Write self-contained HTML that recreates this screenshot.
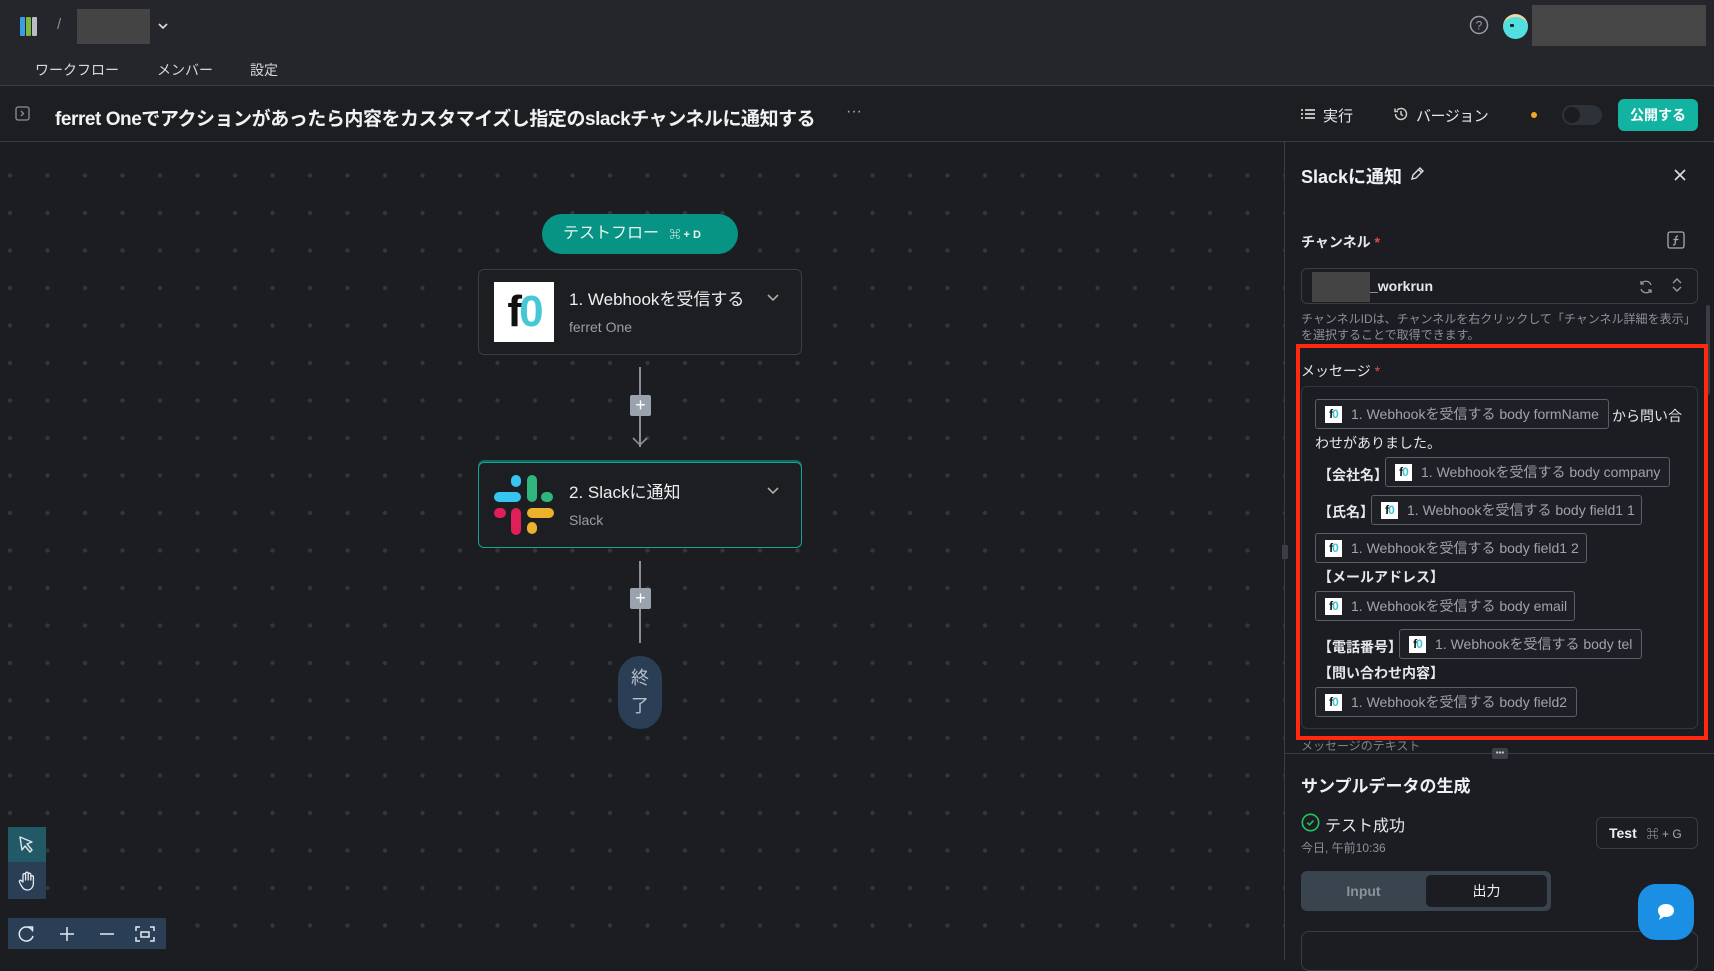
<!DOCTYPE html>
<html><head><meta charset="utf-8"><style>
*{box-sizing:border-box;margin:0;padding:0}
body{width:1714px;height:960px;overflow:hidden;background:#1c1d21;font-family:"Liberation Sans","Noto Sans CJK JP",sans-serif;color:#e6e7ea;position:relative}
.a{position:absolute}
.top{left:0;top:0;width:1714px;height:86px;background:#25262b;border-bottom:1px solid #3a3c42}
.hdr{left:0;top:86px;width:1714px;height:56px;background:#1c1e22;border-bottom:1px solid #3a3d44}
.canvas{left:0;top:142px;width:1284px;height:818px;background-color:#1c1d21;background-image:radial-gradient(circle at 18.75px 18.75px,#34363c 1.9px,transparent 2.4px);background-size:37.5px 37.5px;background-position:-8.75px 14.75px}
.panel{left:1284px;top:142px;width:430px;height:818px;background:#1b1d22;border-left:1px solid #3a3d44}
.chip{position:absolute;height:30px;border:1px solid #5a5e66;border-radius:3px;background:#1e2025;font-size:14px;color:#9fa3ab;line-height:28px;padding-left:9px;white-space:nowrap;display:flex;align-items:center}
.fo{display:inline-block;flex:none;width:17px;height:17px;background:#fff;margin-right:9px;font-weight:bold;font-size:12px;line-height:17px;text-align:center;color:#111;letter-spacing:-1px}
.fo b{color:#3fc6d3}
.lbl{position:absolute;font-size:14px;color:#e6e7ea;font-weight:bold}
.card{position:absolute;left:478px;width:324px;height:86px;border:1px solid #3a3d44;border-radius:6px;background:#1c1e22}
.ct{position:absolute;left:90px;top:15px;font-size:17px;color:#eceef0}
.cs{position:absolute;left:90px;top:49px;font-size:14px;color:#9a9ea6}
.chev{position:absolute;left:287px;top:22px}
.line{position:absolute;left:639px;width:1.5px;background:#8a8e96}
.plus{position:absolute;left:630px;width:21px;height:21px;background:#9aa2ae;border-radius:2px;color:#fff;font-size:18px;line-height:20px;text-align:center}
</style></head><body>
<div class="a top"></div>
<div class="a" style="left:20px;top:17px;width:5px;height:19px;background:#3a9ee4;border-radius:1px"></div>
<div class="a" style="left:26px;top:17px;width:5px;height:19px;background:#7dbb3e;border-radius:1px"></div>
<div class="a" style="left:32px;top:17px;width:5px;height:19px;background:#b9bcc2;border-radius:1px"></div>
<div class="a" style="left:57px;top:16px;font-size:15px;color:#8a8d94">/</div>
<div class="a" style="left:77px;top:9px;width:73px;height:35px;background:#444"></div>
<svg class="a" style="left:157px;top:20px" width="12" height="12" viewBox="0 0 12 12"><path d="M2 4l4 4 4-4" stroke="#ddd" stroke-width="1.6" fill="none"/></svg>
<div class="a" style="left:35px;top:60px;font-size:14px;color:#d6d8dc">ワークフロー</div>
<div class="a" style="left:157px;top:60px;font-size:14px;color:#d6d8dc">メンバー</div>
<div class="a" style="left:250px;top:60px;font-size:14px;color:#d6d8dc">設定</div>
<svg class="a" style="left:1469px;top:15px" width="20" height="20" viewBox="0 0 20 20"><circle cx="10" cy="10" r="8.5" stroke="#9a9da3" stroke-width="1.5" fill="none"/><text x="10" y="14.5" font-size="12" text-anchor="middle" fill="#9a9da3" font-family="Liberation Sans">?</text></svg>
<div class="a" style="left:1503px;top:14px;width:25px;height:25px;border-radius:50%;background:#52dfe0;border-top:3px solid #f2d6a0"></div>
<div class="a" style="left:1510px;top:24px;width:4px;height:3px;background:#222;border-radius:1px"></div>
<div class="a" style="left:1532px;top:5px;width:174px;height:41px;background:#464646"></div>

<div class="a hdr"></div>
<svg class="a" style="left:15px;top:106px" width="15" height="15" viewBox="0 0 15 15"><rect x="1" y="1" width="13" height="13" rx="2" stroke="#8d9097" fill="none" stroke-width="1.3"/><path d="M6 5l2.5 2.5L6 10" stroke="#8d9097" fill="none" stroke-width="1.3"/></svg>
<div class="a" style="left:55px;top:104px;font-size:19px;font-weight:bold;color:#f1f2f4;letter-spacing:-0.45px">ferret Oneでアクションがあったら内容をカスタマイズし指定のslackチャンネルに通知する</div>
<div class="a" style="left:846px;top:103px;font-size:16px;color:#aaa">···</div>
<svg class="a" style="left:1301px;top:108px" width="14" height="12" viewBox="0 0 14 12"><g fill="#bbb"><rect x="0" y="1" width="2" height="2"/><rect x="4" y="1" width="10" height="2"/><rect x="0" y="5" width="2" height="2"/><rect x="4" y="5" width="10" height="2"/><rect x="0" y="9" width="2" height="2"/><rect x="4" y="9" width="10" height="2"/></g></svg>
<div class="a" style="left:1323px;top:105px;font-size:15px;color:#e6e7ea">実行</div>
<svg class="a" style="left:1393px;top:106px" width="16" height="16" viewBox="0 0 16 16"><path d="M2.5 8a5.5 5.5 0 1 0 1.6-3.9" stroke="#ccc" stroke-width="1.5" fill="none"/><path d="M2 2.5v3h3" stroke="#ccc" stroke-width="1.5" fill="none"/><path d="M8 5v3.3l2 1.5" stroke="#ccc" stroke-width="1.5" fill="none"/></svg>
<div class="a" style="left:1416px;top:105px;font-size:15px;color:#e6e7ea;letter-spacing:-0.5px">バージョン</div>
<div class="a" style="left:1531px;top:112px;width:6px;height:6px;border-radius:50%;background:#f5a524"></div>
<div class="a" style="left:1562px;top:105px;width:40px;height:20px;border-radius:10px;background:#2d3138"></div>
<div class="a" style="left:1564px;top:107px;width:16px;height:16px;border-radius:50%;background:#1a1c20"></div>
<div class="a" style="left:1618px;top:99px;width:80px;height:32px;border-radius:6px;background:#12b3a0;color:#fff;font-size:14px;font-weight:bold;text-align:center;line-height:32px">公開する</div>

<div class="a canvas"></div>
<div class="a" style="left:542px;top:214px;width:196px;height:40px;border-radius:20px;background:#079484;color:#e8f5f3;font-size:16px;line-height:40px;padding-left:21px">テストフロー <span style="font-size:11px;font-weight:bold;margin-left:6px">⌘ + D</span></div>
<div class="card" style="top:269px">
  <div class="a" style="left:15px;top:12px;width:60px;height:60px;background:#fff;font-weight:bold;font-size:44px;line-height:60px;text-align:center;color:#111;letter-spacing:-3px">f<span style="color:#46c7d6">0</span></div>
  <div class="ct">1. Webhookを受信する</div><div class="cs">ferret One</div>
  <svg class="chev" width="14" height="10" viewBox="0 0 14 10"><path d="M2 3l5 5 5-5" stroke="#aaa" stroke-width="1.6" fill="none"/></svg>
</div>
<div class="line" style="top:367px;height:80px"></div>
<div class="plus" style="top:395px">+</div>
<svg class="a" style="left:632px;top:435px" width="16" height="12" viewBox="0 0 16 12"><path d="M1 3l7 7 7-7" stroke="#8a8e96" stroke-width="1.6" fill="none"/></svg>
<div class="card" style="top:462px;border:1.5px solid #13a592;box-shadow:0 -2px 0 #0b6b60">
  <svg class="a" style="left:15px;top:12px" width="60" height="60" viewBox="0 0 60 60">
    <rect x="17" y="0" width="10" height="12" rx="5" fill="#36c5f0"/><rect x="0" y="17" width="27" height="10" rx="5" fill="#36c5f0"/>
    <rect x="33" y="0" width="10" height="27" rx="5" fill="#2eb67d"/><rect x="47" y="17" width="12" height="10" rx="5" fill="#2eb67d"/>
    <rect x="33" y="33" width="27" height="10" rx="5" fill="#ecb22e"/><rect x="33" y="47" width="10" height="12" rx="5" fill="#ecb22e"/>
    <rect x="0" y="33" width="12" height="10" rx="5" fill="#e01e5a"/><rect x="17" y="33" width="10" height="27" rx="5" fill="#e01e5a"/>
  </svg>
  <div class="ct">2. Slackに通知</div><div class="cs">Slack</div>
  <svg class="chev" width="14" height="10" viewBox="0 0 14 10"><path d="M2 3l5 5 5-5" stroke="#aaa" stroke-width="1.6" fill="none"/></svg>
</div>
<div class="line" style="top:561px;height:82px"></div>
<div class="plus" style="top:588px">+</div>
<div class="a" style="left:618px;top:656px;width:44px;height:73px;border-radius:22px;background:#2a3f55;color:#b8bec8;font-size:18px;text-align:center;line-height:28px;padding-top:8px">終<br>了</div>

<div class="a" style="left:8px;top:827px;width:38px;height:35px;background:#215a66"></div>
<svg class="a" style="left:17px;top:835px" width="20" height="20" viewBox="0 0 20 20"><path d="M3 2l12 5-5 2 5 6-2 2-5-6-3 4z" stroke="#e0e6ea" stroke-width="1.4" fill="none" stroke-linejoin="round"/></svg>
<div class="a" style="left:8px;top:862px;width:38px;height:37px;background:#2a3f55"></div>
<svg class="a" style="left:16px;top:870px" width="22" height="22" viewBox="0 0 22 22"><path d="M7 12V5a1.3 1.3 0 0 1 2.6 0v5V3.5a1.3 1.3 0 0 1 2.6 0V10V4.5a1.3 1.3 0 0 1 2.6 0V10V7a1.3 1.3 0 0 1 2.6 0v6c0 4-2.5 7-6 7-3 0-4.5-1.5-6.5-5L3.5 12a1.2 1.2 0 0 1 2-1.3z" stroke="#e6eaee" stroke-width="1.3" fill="none" stroke-linejoin="round"/></svg>
<div class="a" style="left:8px;top:918px;width:158px;height:31px;background:#2a3f55"></div>
<svg class="a" style="left:17px;top:924px" width="140" height="20" viewBox="0 0 140 20"><g stroke="#e6eaee" stroke-width="1.5" fill="none"><path d="M15 6A7 7 0 1 0 16 12"/><path d="M11 3h4.5v4.5"/><path d="M50 3v14M43 10h14"/><path d="M83 10h14"/><path d="M119 7V3h4M133 3h4v4M137 13v4h-4M123 17h-4v-4"/><rect x="124" y="8" width="8" height="5"/></g></svg>

<div class="a panel"></div>
<div class="a" style="left:1282px;top:545px;width:6px;height:14px;background:#3a3d44;border-radius:1px"></div>
<div class="a" style="left:1706px;top:305px;width:4px;height:90px;background:#3a3d44;border-radius:2px"></div>
<div class="a" style="left:1301px;top:163px;font-size:18px;font-weight:bold;color:#eef0f2">Slackに通知</div>
<svg class="a" style="left:1409px;top:166px" width="16" height="16" viewBox="0 0 16 16"><path d="M3 13l1-4 7-7 3 3-7 7z M9.5 3.5l3 3" stroke="#ddd" stroke-width="1.4" fill="none"/></svg>
<svg class="a" style="left:1674px;top:169px" width="12" height="12" viewBox="0 0 12 12"><path d="M1 1l10 10M11 1L1 11" stroke="#ddd" stroke-width="1.6"/></svg>
<div class="a" style="left:1301px;top:232px;font-size:14px;font-weight:bold;color:#e6e7ea">チャンネル <span style="color:#e5484d">*</span></div>
<svg class="a" style="left:1667px;top:231px" width="18" height="18" viewBox="0 0 18 18"><rect x="1" y="1" width="16" height="16" rx="2" stroke="#aaa" stroke-width="1.3" fill="none"/><path d="M11 5c-2 0-2 1-2.3 3L8 13c-.3 1-1 1-2 1M6.5 8.5h5" stroke="#aaa" stroke-width="1.3" fill="none"/></svg>
<div class="a" style="left:1301px;top:268px;width:397px;height:36px;border:1px solid #3a3d44;border-radius:6px"></div>
<div class="a" style="left:1312px;top:272px;width:58px;height:30px;background:#444"></div>
<div class="a" style="left:1370px;top:278px;font-size:14px;font-weight:bold;color:#e6e7ea">_workrun</div>
<svg class="a" style="left:1638px;top:279px" width="16" height="16" viewBox="0 0 16 16"><path d="M13 6A5.5 5.5 0 0 0 3 5M3 10a5.5 5.5 0 0 0 10 1M3 2v3h3M13 14v-3h-3" stroke="#999" stroke-width="1.3" fill="none"/></svg>
<svg class="a" style="left:1671px;top:277px" width="12" height="16" viewBox="0 0 12 16"><path d="M2 6l4-4 4 4M2 10l4 4 4-4" stroke="#999" stroke-width="1.4" fill="none"/></svg>
<div class="a" style="left:1301px;top:311px;font-size:12px;color:#8d9198;line-height:16px">チャンネルIDは、チャンネルを右クリックして「チャンネル詳細を表示」<br>を選択することで取得できます。</div>

<div class="a" style="left:1296px;top:344px;width:412px;height:396px;border:4px solid #ff2a10"></div>
<div class="a" style="left:1301px;top:361px;font-size:14px;color:#e6e7ea">メッセージ <span style="color:#e5484d">*</span></div>
<div class="a" style="left:1301px;top:386px;width:397px;height:343px;border:1px solid #33363d;border-radius:6px"></div>
<div class="chip" style="left:1315px;top:399px;width:294px"><span class="fo">f<b>0</b></span>1. Webhookを受信する body formName</div>
<div class="lbl" style="left:1612px;top:406px;font-weight:normal">から問い合</div>
<div class="lbl" style="left:1315px;top:433px;font-weight:normal">わせがありました。</div>
<div class="lbl" style="left:1318px;top:465px">【会社名】</div>
<div class="chip" style="left:1385px;top:457px;width:285px"><span class="fo">f<b>0</b></span>1. Webhookを受信する body company</div>
<div class="lbl" style="left:1318px;top:502px">【氏名】</div>
<div class="chip" style="left:1371px;top:495px;width:271px"><span class="fo">f<b>0</b></span>1. Webhookを受信する body field1 1</div>
<div class="chip" style="left:1315px;top:533px;width:272px"><span class="fo">f<b>0</b></span>1. Webhookを受信する body field1 2</div>
<div class="lbl" style="left:1318px;top:567px">【メールアドレス】</div>
<div class="chip" style="left:1315px;top:591px;width:260px"><span class="fo">f<b>0</b></span>1. Webhookを受信する body email</div>
<div class="lbl" style="left:1318px;top:637px">【電話番号】</div>
<div class="chip" style="left:1399px;top:629px;width:243px"><span class="fo">f<b>0</b></span>1. Webhookを受信する body tel</div>
<div class="lbl" style="left:1318px;top:663px">【問い合わせ内容】</div>
<div class="chip" style="left:1315px;top:687px;width:262px"><span class="fo">f<b>0</b></span>1. Webhookを受信する body field2</div>

<div class="a" style="left:1301px;top:737px;font-size:12px;color:#7f838a">メッセージのテキスト</div>
<div class="a" style="left:1285px;top:753px;width:429px;height:1px;background:#3a3d44"></div>
<div class="a" style="left:1492px;top:748px;width:16px;height:11px;background:#3a3f48;border-radius:2px;color:#ccc;font-size:8px;line-height:10px;text-align:center">▪▪▪</div>
<div class="a" style="left:1301px;top:772px;font-size:17px;font-weight:bold;color:#eef0f2">サンプルデータの生成</div>
<svg class="a" style="left:1301px;top:813px" width="19" height="19" viewBox="0 0 19 19"><circle cx="9.5" cy="9.5" r="8.2" stroke="#22c55e" stroke-width="1.6" fill="none"/><path d="M6.3 9.7l2.2 2.1 4-4.2" stroke="#22c55e" stroke-width="1.6" fill="none"/></svg>
<div class="a" style="left:1325px;top:812px;font-size:16px;color:#e6e7ea">テスト成功</div>
<div class="a" style="left:1301px;top:839px;font-size:12px;color:#8d9198">今日, 午前10:36</div>
<div class="a" style="left:1596px;top:817px;width:102px;height:32px;border:1px solid #3a3d44;border-radius:6px;font-size:14px;line-height:30px;padding-left:12px;font-weight:bold;color:#eee">Test <span style="font-weight:normal;color:#aaa;font-size:12px;margin-left:6px">⌘ + G</span></div>
<div class="a" style="left:1301px;top:871px;width:250px;height:40px;border-radius:6px;background:#3a444f"></div>
<div class="a" style="left:1301px;top:871px;width:125px;height:40px;line-height:40px;text-align:center;font-size:14px;font-weight:bold;color:#8a929c">Input</div>
<div class="a" style="left:1426px;top:875px;width:121px;height:32px;border-radius:5px;background:#1b1d22;line-height:32px;text-align:center;font-size:14px;color:#eee">出力</div>
<div class="a" style="left:1301px;top:931px;width:397px;height:40px;border:1px solid #3a3d44;border-radius:8px"></div>
<div class="a" style="left:1638px;top:884px;width:56px;height:56px;border-radius:18px;background:#1a8fe3"></div>
<svg class="a" style="left:1654px;top:900px" width="24" height="24" viewBox="0 0 24 24"><path d="M12 4c5 0 8 2.8 8 6.5S17 17 12 17c-.8 0-1.5 0-2.2-.2L5 20l1.3-4.2C4.8 14.6 4 12.7 4 10.5 4 6.8 7 4 12 4z" fill="#fff"/></svg>
</body></html>
